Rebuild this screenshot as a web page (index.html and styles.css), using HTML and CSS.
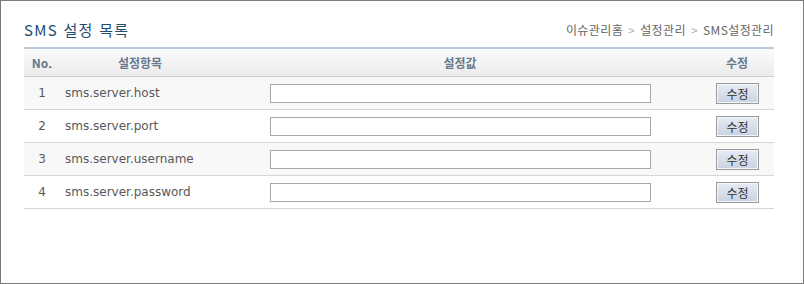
FILE: index.html
```html
<!DOCTYPE html>
<html lang="ko">
<head>
<meta charset="utf-8">
<title>SMS 설정 목록</title>
<link rel="stylesheet" href="styles.css">
</head>
<body>
<div class="page">
  <div class="content">
    <div class="head">
      <h1 class="title">SMS 설정 목록</h1>
      <div class="crumbs">이슈관리홈<span class="sep">&gt;</span>설정관리<span class="sep">&gt;</span>SMS설정관리</div>
    </div>
    <table class="list">
      <thead>
        <tr>
          <th class="c-no">No.</th>
          <th class="c-key">설정항목</th>
          <th class="c-val">설정값</th>
          <th class="c-act">수정</th>
        </tr>
      </thead>
      <tbody>
        <tr class="odd">
          <td class="c-no">1</td>
          <td class="c-key">sms.server.host</td>
          <td class="c-val"><input class="field" type="text"></td>
          <td class="c-act"><button class="btn" type="button">수정</button></td>
        </tr>
        <tr>
          <td class="c-no">2</td>
          <td class="c-key">sms.server.port</td>
          <td class="c-val"><input class="field" type="text"></td>
          <td class="c-act"><button class="btn" type="button">수정</button></td>
        </tr>
        <tr class="odd">
          <td class="c-no">3</td>
          <td class="c-key">sms.server.username</td>
          <td class="c-val"><input class="field" type="text"></td>
          <td class="c-act"><button class="btn" type="button">수정</button></td>
        </tr>
        <tr>
          <td class="c-no">4</td>
          <td class="c-key">sms.server.password</td>
          <td class="c-val"><input class="field" type="text"></td>
          <td class="c-act"><button class="btn" type="button">수정</button></td>
        </tr>
      </tbody>
    </table>
  </div>
</div>
</body>
</html>
```

FILE: styles.css
```css
html, body {
  margin: 0;
  padding: 0;
  background: #ffffff;
}

body {
  font-family: "DejaVu Sans", "Noto Sans CJK KR", sans-serif;
  font-size: 12px;
  color: #585858;
}

.page {
  width: 804px;
  height: 284px;
  box-sizing: border-box;
  border: 1px solid #7a7a7a;
  background: #ffffff;
}

.content {
  width: 750px;
  margin-left: 23px;
}

.head {
  height: 46px;
  box-sizing: border-box;
  padding-bottom: 8px;
  display: flex;
  justify-content: space-between;
  align-items: flex-end;
}

.title {
  margin: 0;
  font-family: "Noto Sans CJK KR", "DejaVu Sans", sans-serif;
  font-size: 15px;
  line-height: 18px;
  font-weight: normal;
  color: #224d6e;
  letter-spacing: 1.3px;
}

.crumbs {
  font-family: "Noto Sans CJK KR", sans-serif;
  font-size: 12px;
  line-height: 16px;
  color: #666666;
  letter-spacing: 0.4px;
  padding-bottom: 1px;
}

.sep {
  color: #b0b0b0;
  margin: 0 5px;
}

.list {
  width: 750px;
  border-collapse: collapse;
  table-layout: fixed;
  border-top: 2px solid #bccbd9;
}

.list th {
  height: 27px;
  padding: 0;
  font-family: "Noto Sans CJK KR", "DejaVu Sans", sans-serif;
  font-size: 12px;
  font-weight: bold;
  color: #66798c;
  background: linear-gradient(#fbfbfb, #ebebeb);
  border-bottom: 1px solid #cccccc;
  vertical-align: middle;
}

.list td {
  height: 32px;
  padding: 0;
  border-bottom: 1px solid #d6d6d6;
  vertical-align: middle;
}

.list tr.odd td {
  background: #f8f8f8;
}

.c-no {
  width: 36px;
  text-align: center;
}

.c-key {
  width: 160px;
  text-align: left;
}

td.c-key {
  padding-left: 5px !important;
}

th.c-key {
  text-align: center;
}

.c-val {
  text-align: center;
}

.c-act {
  width: 74px;
  text-align: center;
}

.field {
  display: block;
  margin: 0 auto;
  width: 381px;
  height: 19px;
  box-sizing: border-box;
  border: 1px solid #a8a8a8;
  background: #ffffff;
  padding: 0 3px;
  font-size: 12px;
}

.btn {
  display: inline-block;
  width: 43px;
  height: 21px;
  box-sizing: border-box;
  padding: 0;
  margin-left: 1px;
  border: 1px solid #9a9a9a;
  box-shadow: inset 0 0 0 1px #f4f6fa;
  background: linear-gradient(#e7ecf4, #c8d2e2);
  font-family: "Noto Sans CJK KR", sans-serif;
  font-size: 12px;
  line-height: 17px;
  color: #333333;
  cursor: pointer;
}
```
